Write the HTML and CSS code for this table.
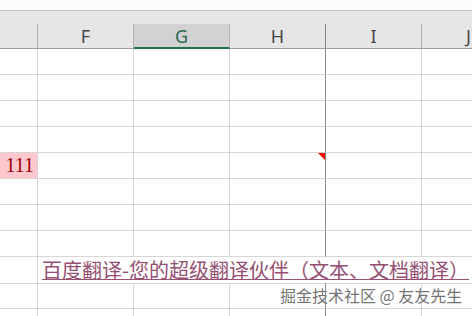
FILE: index.html
```html
<!DOCTYPE html>
<html lang="zh">
<head>
<meta charset="utf-8">
<link rel="stylesheet" href="styles.css">
</head>
<body>
<div class="topbar"></div>
<div class="header">
  <div class="hc"></div>
  <div class="hc">F</div>
  <div class="hc sel">G</div>
  <div class="hc">H</div>
  <div class="hc">I</div>
  <div class="hc last">J</div>
</div>
<div class="sheet">
  <div class="row"><div class="c"></div><div class="c"></div><div class="c"></div><div class="c"></div><div class="c"></div><div class="c"></div></div>
  <div class="row"><div class="c"></div><div class="c"></div><div class="c"></div><div class="c"></div><div class="c"></div><div class="c"></div></div>
  <div class="row"><div class="c"></div><div class="c"></div><div class="c"></div><div class="c"></div><div class="c"></div><div class="c"></div></div>
  <div class="row"><div class="c"></div><div class="c"></div><div class="c"></div><div class="c"></div><div class="c"></div><div class="c"></div></div>
  <div class="row"><div class="c bad">111</div><div class="c"></div><div class="c"></div><div class="c note"><span class="flag"></span></div><div class="c"></div><div class="c"></div></div>
  <div class="row"><div class="c"></div><div class="c"></div><div class="c"></div><div class="c"></div><div class="c"></div><div class="c"></div></div>
  <div class="row"><div class="c"></div><div class="c"></div><div class="c"></div><div class="c"></div><div class="c"></div><div class="c"></div></div>
  <div class="row"><div class="c"></div><div class="c"></div><div class="c"></div><div class="c"></div><div class="c"></div><div class="c"></div></div>
  <div class="row"><div class="c"></div><div class="c span"><a class="link" href="#">百度翻译-您的超级翻译伙伴（文本、文档翻译）</a></div></div>
  <div class="row"><div class="c"></div><div class="c"></div><div class="c"></div><div class="c"></div><div class="c"></div><div class="c"></div></div>
  <div class="row tail"><div class="c"></div><div class="c"></div><div class="c"></div><div class="c"></div><div class="c"></div><div class="c"></div></div>
</div>
<div class="watermark">掘金技术社区 @ 友友先生</div>
</body>
</html>
```

FILE: styles.css
```css
html, body {
  margin: 0;
  padding: 0;
  overflow: hidden;
}
body {
  width: 472px;
  height: 316px;
  background: #ffffff;
  position: relative;
  font-family: "Noto Sans", "Noto Sans CJK SC", sans-serif;
}
.topbar {
  height: 10px;
  background: #fbfbfb;
  border-bottom: 1px solid #c6c6c6;
}
.header {
  display: grid;
  grid-template-columns: 38px repeat(4, 96px) 50px;
  padding-top: 13px;
  background: #e6e6e6;
}
.hc {
  box-sizing: border-box;
  height: 25px;
  border-right: 1px solid #b4b4b4;
  border-bottom: 1px solid #9e9e9e;
  text-align: center;
  font-size: 18px;
  line-height: 24px;
  color: #454545;
}
.hc:nth-child(4) {
  border-right-color: #8a8a8a;
}
.hc.last {
  border-right: none;
  text-align: left;
  padding-left: 44px;
  overflow: hidden;
}
.hc.sel {
  background: #d2d2d2;
  color: #2c6a4f;
  border-bottom: 2px solid #217346;
}
.sheet {
  display: flex;
  flex-direction: column;
}
.row {
  display: grid;
  grid-template-columns: 38px repeat(4, 96px) 50px;
  height: 26px;
}
.row.tail {
  height: 8px;
}
.c {
  box-sizing: border-box;
  border-right: 1px solid #d6d6d6;
  border-bottom: 1px solid #d6d6d6;
}
.row > .c:nth-child(4) {
  border-right-color: #8a8a8a;
}
.row > .c:nth-child(6) {
  border-right: none;
}
.row.tail > .c {
  border-bottom: none;
}
.c.bad {
  background: #ffc7ce;
  color: #9c0006;
  text-align: right;
  padding-right: 3px;
  font-family: "Liberation Serif", serif;
  font-size: 20px;
  line-height: 25px;
}
.c.note {
  position: relative;
}
.flag {
  position: absolute;
  top: 0;
  right: 0;
  width: 0;
  height: 0;
  border-top: 7px solid #ff0000;
  border-left: 7px solid transparent;
}
.c.span {
  grid-column: span 5;
  border-right: none;
  padding-left: 4px;
  white-space: nowrap;
}
.link {
  font-family: "Noto Sans CJK SC", sans-serif;
  font-size: 20px;
  line-height: 25px;
  color: #954f72;
  text-decoration: underline;
  text-decoration-thickness: 1px;
}
.watermark {
  position: absolute;
  left: 280px;
  top: 285px;
  font-family: "Noto Sans CJK SC", sans-serif;
  font-size: 16px;
  line-height: 20px;
  color: rgba(95, 95, 95, 0.9);
  text-shadow: 0 0 1px #ffffff;
  white-space: nowrap;
}
```
